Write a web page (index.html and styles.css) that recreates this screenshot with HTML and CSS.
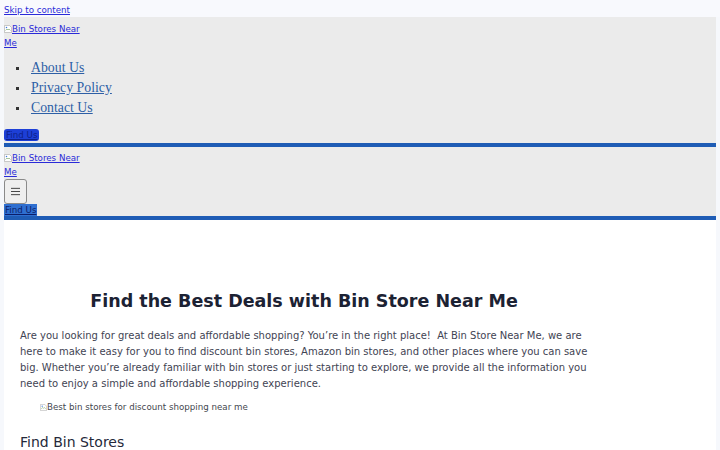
FILE: index.html
```html
<!DOCTYPE html>
<html lang="en">
<head>
<meta charset="utf-8">
<title>Find the Best Deals with Bin Store Near Me</title>
<link rel="stylesheet" href="styles.css">
</head>
<body>
<div class="page">
  <a class="skip-link" href="#content">Skip to content</a>

  <header class="site-header">
    <a class="logo" href="#"><svg class="broken" viewBox="0 0 16 16" width="8" height="8"><path d="M1 1h10l4 4v10H1z" fill="#fff" stroke="#9a9a9a"/><path d="M3 11l3-3 2 2 2-2 3 3" fill="none" stroke="#4a8a3a"/><circle cx="5" cy="5" r="1.5" fill="#3b7be0"/></svg>Bin Stores Near Me</a>
    <ul class="menu">
      <li><a href="#">About Us</a></li>
      <li><a href="#">Privacy Policy</a></li>
      <li><a href="#">Contact Us</a></li>
    </ul>
    <a class="find-us find-us--desktop" href="#">Find Us</a>
  </header>

  <header class="site-header site-header--mobile">
    <a class="logo" href="#"><svg class="broken" viewBox="0 0 16 16" width="8" height="8"><path d="M1 1h10l4 4v10H1z" fill="#fff" stroke="#9a9a9a"/><path d="M3 11l3-3 2 2 2-2 3 3" fill="none" stroke="#4a8a3a"/><circle cx="5" cy="5" r="1.5" fill="#3b7be0"/></svg>Bin Stores Near Me</a>
    <button class="menu-toggle" type="button" aria-label="Menu">
      <svg viewBox="0 0 12 10" width="11" height="9"><path d="M1 1.5h10M1 5h10M1 8.5h10" stroke="#333" stroke-width="1"/></svg>
    </button>
    <a class="find-us find-us--mobile" href="#">Find Us</a>
  </header>

  <main id="content" class="content">
    <div class="entry">
      <h1>Find the Best Deals with Bin Store Near Me</h1>
      <p>Are you looking for great deals and affordable shopping? You’re in the right place!&nbsp; At Bin Store Near Me, we are here to make it easy for you to find discount bin stores, Amazon bin stores, and other places where you can save big. Whether you’re already familiar with bin stores or just starting to explore, we provide all the information you need to enjoy a simple and affordable shopping experience.</p>
      <figure class="hero-figure"><span class="alt"><svg class="broken" viewBox="0 0 16 16" width="7" height="7"><path d="M1 1h10l4 4v10H1z" fill="#fff" stroke="#9a9a9a"/><path d="M3 11l3-3 2 2 2-2 3 3" fill="none" stroke="#4a8a3a"/><circle cx="5" cy="5" r="1.5" fill="#3b7be0"/></svg>Best bin stores for discount shopping near me</span></figure>
      <h2>Find Bin Stores</h2>
    </div>
  </main>
</div>
</body>
</html>
```

FILE: styles.css
```css
html, body {
  margin: 0;
  padding: 0;
}

body {
  background: #f6f8fc;
  font-family: "DejaVu Sans", sans-serif;
}

.page {
  margin: 0 4px;
  background: #fff;
  min-height: 450px;
}

.skip-link {
  display: block;
  height: 17px;
  line-height: 21px;
  font-size: 8.7px;
  color: #2a2ad8;
  background: #f8f9fd;
  margin: 0 -4px;
  padding: 0 4px;
}

.site-header {
  background: #ebebeb;
  border-bottom: 4px solid #1f5cb5;
  padding-top: 5px;
}

.logo {
  display: block;
  width: 80px;
  font-size: 8.7px;
  line-height: 14px;
  color: #2a2ad8;
}

.broken {
  vertical-align: -1px;
}

.menu {
  margin: 0;
  padding: 8px 0 0 0;
  font-family: "Liberation Serif", "Times New Roman", serif;
  font-size: 13.8px;
  line-height: 20px;
  list-style: none;
}

.menu li {
  display: flex;
  align-items: baseline;
}

.menu li::before {
  content: "";
  flex: none;
  width: 3px;
  height: 3px;
  margin: 0 12px 0 12px;
  background: #333;
  transform: translateY(-2px);
}

.menu a {
  color: #2d5fa6;
}

.find-us {
  display: block;
  width: fit-content;
  font-size: 8.7px;
  line-height: 12px;
}

.find-us--desktop {
  margin-top: 11px;
  margin-bottom: 2px;
  padding: 0 2px;
  background: #1d3fd6;
  color: #0d1f8a;
  border-radius: 3px;
}

.site-header--mobile {
  padding-top: 4px;
}

.menu-toggle {
  display: block;
  width: 23px;
  height: 25px;
  padding: 0;
  margin: 0;
  background: #efefef;
  border: 1px solid #8a8a8a;
  border-radius: 3px;
}

.menu-toggle svg {
  display: block;
  margin: 0 auto;
}

.find-us--mobile {
  padding: 0 1px;
  background: #2f6fd0;
  color: #0b1e6a;
}

.content {
  padding: 69px 16px 0;
}

.entry {
  width: 568px;
}

h1 {
  margin: 0;
  text-align: center;
  font-size: 17.5px;
  line-height: 24px;
  font-weight: bold;
  color: #1c2233;
}

p {
  margin: 15px 0 0;
  font-size: 10px;
  line-height: 16px;
  color: #3f4453;
}

.hero-figure {
  margin: 3px 0 0 20px;
  height: 14px;
}

.alt {
  font-size: 8.7px;
  line-height: 14px;
  color: #44474f;
}

h2 {
  margin: 23px 0 0;
  font-size: 14px;
  line-height: 20px;
  font-weight: normal;
  color: #25293a;
}
```
